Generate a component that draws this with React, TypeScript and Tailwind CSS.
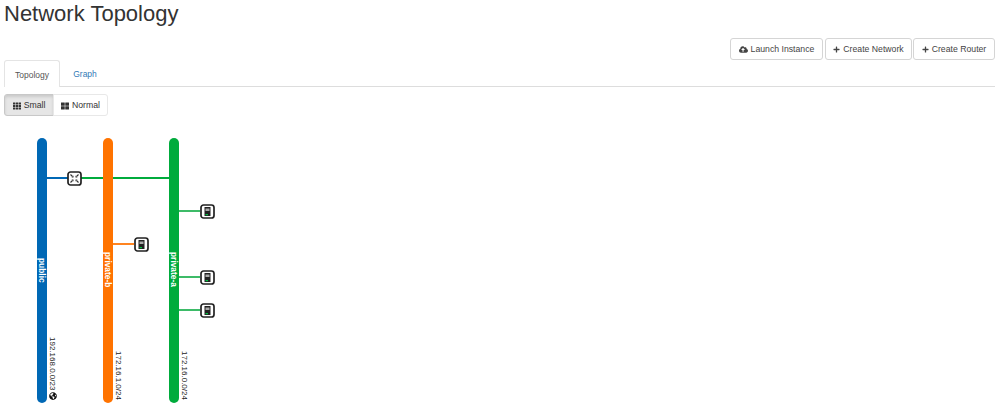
import React from 'react';
import { FaCloudUploadAlt, FaPlus, FaTh, FaThLarge, FaGlobeAmericas } from 'react-icons/fa';

const networks = [
    { name: 'public', cidr: '192.168.0.0/23', x: 37, color: '#0068b5' },
    { name: 'private-b', cidr: '172.16.1.0/24', x: 103, color: '#ff7300' },
    { name: 'private-a', cidr: '172.16.0.0/24', x: 169, color: '#00ab3c' },
];

const instances = [
    { x: 113, y: 244, iconX: 134, color: '#ff8420' },
    { x: 179, y: 211, iconX: 200, color: '#3dbb68' },
    { x: 179, y: 277, iconX: 200, color: '#3dbb68' },
    { x: 179, y: 310, iconX: 200, color: '#3dbb68' },
];

const ActionButton: React.FC<{ icon: React.ReactNode; label: string; className: string }> = ({ icon, label, className }) => (
    <button className={`flex h-[22px] items-center justify-center gap-[3px] rounded-[3px] border border-[#d5d5d5] bg-white pt-px text-[8.7px] text-[#444] ${className}`}>
        {icon}
        <span>{label}</span>
    </button>
);

const InstanceIcon: React.FC<{ x: number; y: number }> = ({ x, y }) => (
    <g transform={`translate(${x} ${y})`}>
        <rect x="1" y="1" width="13" height="13" rx="2.5" fill="#fff" stroke="#222" strokeWidth="1.7" />
        <rect x="4.5" y="3" width="6" height="9" fill="#222" />
        <rect x="5.5" y="4.5" width="4" height="2.5" fill="#aaa" />
        <rect x="5.5" y="10" width="2.5" height="1.2" fill="#00c040" />
    </g>
);

const RouterIcon: React.FC<{ x: number; y: number }> = ({ x, y }) => (
    <g transform={`translate(${x} ${y})`}>
        <rect x="1" y="1" width="13" height="13" rx="2.5" fill="#fff" stroke="#222" strokeWidth="1.7" />
        <path d="M3.5 3.5 L5.5 5.5 M11.5 3.5 L9.5 5.5 M3.5 11.5 L5.5 9.5 M11.5 11.5 L9.5 9.5" fill="none" stroke="#333" strokeWidth="1.1" />
        <path d="M4.5 6.5 H6.5 V4.5 Z M10.5 6.5 H8.5 V4.5 Z M4.5 8.5 H6.5 V10.5 Z M10.5 8.5 H8.5 V10.5 Z" fill="#333" />
    </g>
);

export default function App() {
    return (
        <div className="h-[408px] w-[1000px] overflow-hidden bg-white pl-[4px] pr-[5px] font-['Liberation_Sans',Arial,sans-serif] text-[#333]">
            <h1 className="h-[38px] text-[22px] leading-[28px] font-normal">Network Topology</h1>
            <div className="flex h-[22px] justify-end">
                <ActionButton className="w-[93px]" icon={<FaCloudUploadAlt className="h-[9px] w-[9px]" />} label="Launch Instance" />
                <ActionButton className="ml-[2px] w-[87px]" icon={<FaPlus className="h-[7px] w-[7px]" />} label="Create Network" />
                <ActionButton className="ml-px w-[82px]" icon={<FaPlus className="h-[7px] w-[7px]" />} label="Create Router" />
            </div>
            <div className="flex h-[27px] border-b border-[#ddd] text-[8.5px]">
                <div className="flex h-[27px] w-[56px] items-center justify-center rounded-t-[3px] border border-b-0 border-[#e4e4e4] bg-white pt-[2px] text-[#555]">Topology</div>
                <div className="flex h-[26px] w-[50px] items-center justify-center pt-[2px] text-[#337ab7]">Graph</div>
            </div>
            <div className="mt-[7px] flex h-[22px] w-[104px] text-[8.7px]">
                <div className="flex w-[50px] items-center justify-center gap-[3px] rounded-l-[3px] border border-[#c8c8c8] bg-[#e6e6e6] pt-px shadow-[inset_0_2px_3px_rgba(0,0,0,0.12)]">
                    <FaTh className="h-[8px] w-[8px]" />
                    <span>Small</span>
                </div>
                <div className="-ml-px flex flex-1 items-center justify-center gap-[3px] rounded-r-[3px] border border-[#e8e8e8] bg-white pt-px">
                    <FaThLarge className="h-[8px] w-[8px]" />
                    <span>Normal</span>
                </div>
            </div>
            <div className="relative -ml-[4px] mt-[7px] h-[286px] w-[1000px]">
                <svg className="absolute -top-[123px] left-0" width="1000" height="408" viewBox="0 0 1000 408" fontFamily="'Liberation Sans', Arial, sans-serif">
                    <rect x="47" y="177" width="22" height="2" fill="#0068b5" />
                    <rect x="80" y="177" width="90" height="2" fill="#00ab3c" />
                    {instances.map(link => (
                        <rect key={link.y} x={link.x} y={link.y - 1} width={link.iconX - link.x} height="2" fill={link.color} />
                    ))}
                    {networks.map(net => (
                        <g key={net.name}>
                            <rect x={net.x} y="138" width="10" height="265" rx="5" fill={net.color} />
                            <text transform={`translate(${net.x + 2} ${net.name === 'public' ? 258 : 252}) rotate(90)`} fontSize="8.4" fontWeight="bold" fill="#fff">{net.name}</text>
                            <text transform={`translate(${net.x + 13} ${net.name === 'public' ? 337 : 351}) rotate(90)`} fontSize="8" fill="#222">{net.cidr}</text>
                        </g>
                    ))}
                    <FaGlobeAmericas x="49" y="392" size="8" color="#111" />
                    <RouterIcon x={67} y={171} />
                    {instances.map(link => (
                        <InstanceIcon key={link.y} x={link.iconX} y={link.y - 7} />
                    ))}
                </svg>
            </div>
        </div>
    );
}
